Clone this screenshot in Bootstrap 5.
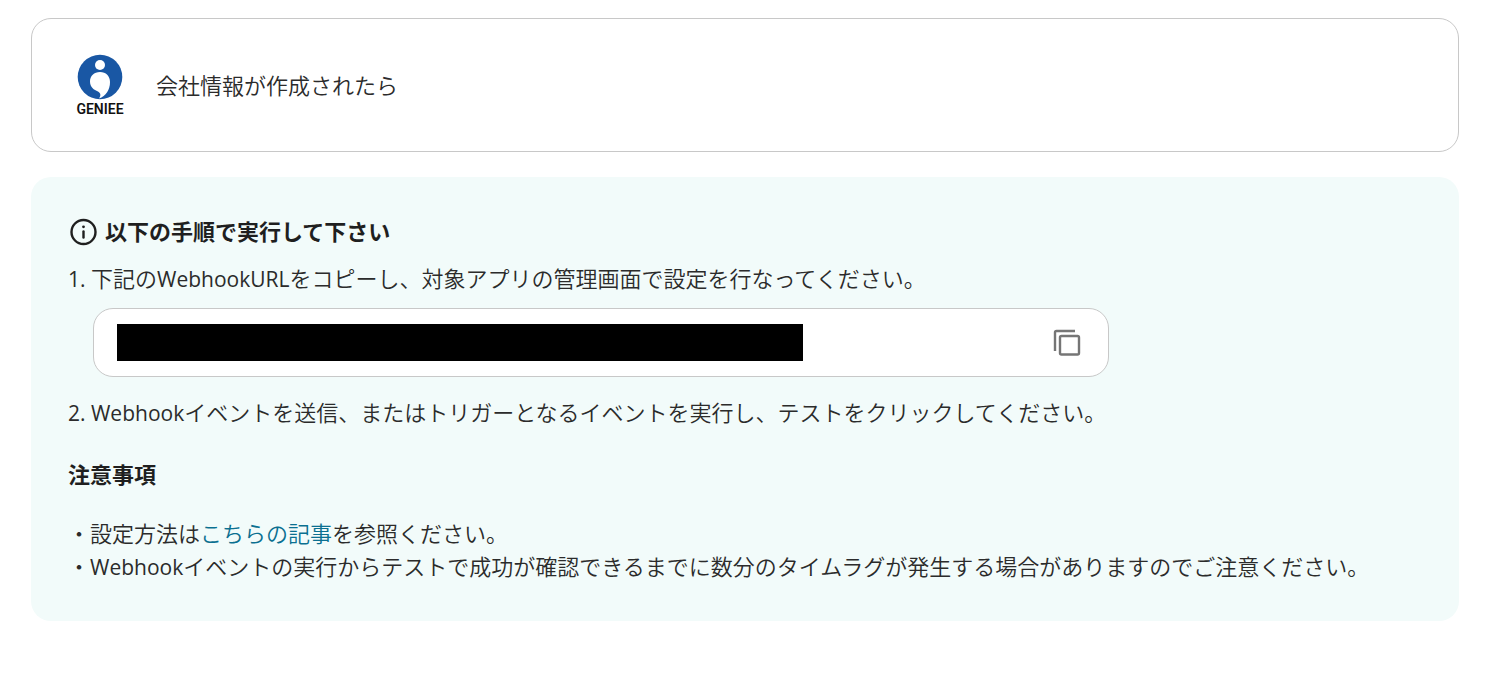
<!DOCTYPE html>
<html lang="ja">
<head>
<meta charset="utf-8">
<meta name="viewport" content="width=device-width, initial-scale=1">
<title>Webhook</title>
<link href="https://cdn.jsdelivr.net/npm/bootstrap@5.3.0/dist/css/bootstrap.min.css" rel="stylesheet">
<style>
  body { font-family: "Open Sans", "Noto Sans CJK JP", sans-serif; font-size: 22px; line-height: 33px; font-weight: 350; color: #2b2b2b; background: #fff; }
  .latin { font-size: 21px; line-height: 1; font-weight: 400; }
  .page { padding: 18px 46px 24px 31px; }
  .trigger-box { border: 1px solid #c8c8c8; border-radius: 20px; padding: 35px 43px; gap: 31px; margin-bottom: 25px; }
  .steps-box { background: #f2fbfa; border-radius: 20px; padding: 38px 37px; }
  .steps-box h2, .steps-box h3 { font-size: 22px; line-height: 33px; font-weight: 700; color: #1f1f1f; }
  .steps-box h2 { gap: 6px; margin-bottom: 14px; }
  .steps-box h3 { margin: 29px 0 26px; }
  .url-field { border: 1px solid #c8c8c8; border-radius: 20px; padding: 15px 24px 15px 23px; margin: 13px 0 19px 25px; }
  .url-value { width: 71%; height: 37px; border: 0; border-radius: 0; padding: 0 8px; background: #000; color: #000; }
  .copy-btn { line-height: 0; color: #757575; }
  .doc-link { color: #0b7091; }
</style>
</head>
<body>
<main class="page">
  <section class="trigger-box d-flex align-items-center">
    <svg width="50" height="62" viewBox="0 0 50 62" role="img" aria-label="GENIEE" class="flex-shrink-0">
      <circle cx="25" cy="23" r="22.3" fill="#1957a4"/>
      <circle cx="25" cy="11" r="5" fill="#fff"/>
      <path d="M25 18C19 18 15 22 15 27.5C15 33 19 36 23 37.500C26 39 26 42 24 44.500C31 42 35 36 35 28C35 22 31 18 25 18z" fill="#fff"/>
      <text x="25" y="60" text-anchor="middle" font-family="Roboto, sans-serif" font-size="14" font-weight="600" fill="#111">GENIEE</text>
    </svg>
    <span>会社情報が作成されたら</span>
  </section>

  <section class="steps-box">
    <h2 class="d-flex align-items-center">
      <svg width="31" height="30" viewBox="0 0 31 30" fill="none" aria-hidden="true">
        <circle cx="15.5" cy="15" r="12" stroke="#1f1f1f" stroke-width="2.4"/>
        <path d="M15.5 14.5v6" stroke="#1f1f1f" stroke-width="2.4" stroke-linecap="round"/>
        <circle cx="15.5" cy="9.8" r="1.4" fill="#1f1f1f"/>
      </svg>
      <span>以下の手順で実行して下さい</span>
    </h2>
    <p class="mb-0"><label for="hook"><span class="latin">1. </span>下記の<span class="latin">WebhookURL</span>をコピーし、対象アプリの管理画面で設定を行なってください。</label></p>
    <div class="url-field bg-white w-75 d-flex align-items-center justify-content-between">
      <input id="hook" class="url-value" type="text" readonly>
      <button type="button" class="copy-btn btn p-0 border-0" aria-label="コピー">
        <svg width="34" height="34" viewBox="0 0 34 34" fill="none" stroke="currentColor" stroke-width="2.4">
          <rect x="10" y="10" width="19" height="18.5" rx="1.5"/>
          <path d="M5 25V6.5Q5 5 6.5 5H25"/>
        </svg>
      </button>
    </div>
    <p class="mb-0"><span class="latin">2. Webhook</span>イベントを送信、またはトリガーとなるイベントを実行し、テストをクリックしてください。</p>
    <h3>注意事項</h3>
    <p class="mb-0">・設定方法は<a href="#" class="doc-link text-decoration-none">こちらの記事</a>を参照ください。</p>
    <p class="mb-0">・<span class="latin">Webhook</span>イベントの実行からテストで成功が確認できるまでに数分のタイムラグが発生する場合がありますのでご注意ください。</p>
  </section>
</main>
<script src="https://cdn.jsdelivr.net/npm/bootstrap@5.3.0/dist/js/bootstrap.bundle.min.js"></script>
</body>
</html>
